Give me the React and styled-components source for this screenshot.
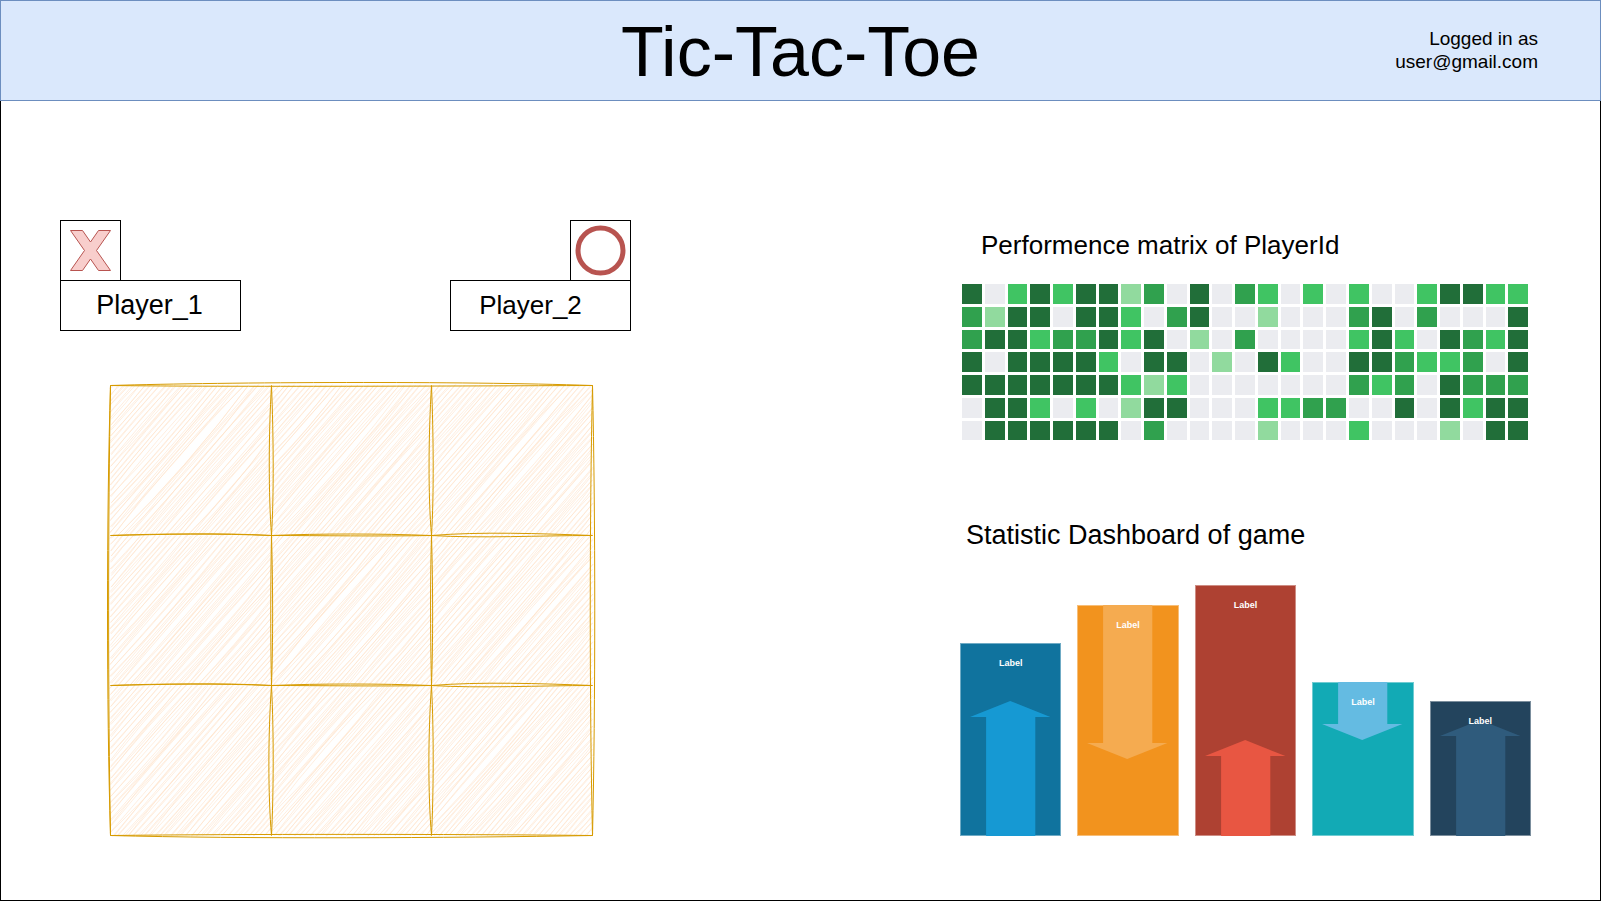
import React from "react";
import styled, { createGlobalStyle } from "styled-components";

const GlobalStyle = createGlobalStyle`
  *, *::before, *::after { box-sizing: border-box; }
  body {
    margin: 0;
    background: #fff;
    color: #000;
    font-family: "Liberation Sans", Arial, Helvetica, sans-serif;
  }
`;

const Page = styled.div`
  display: flex;
  flex-direction: column;
  min-height: 100vh;
`;

const Header = styled.header`
  display: grid;
  grid-template-columns: 1fr auto 1fr;
  align-items: center;
  min-height: 101px;
  padding: 0 62px;
  border: 1px solid #6c8ebf;
  background: #dae8fc;
`;

const Title = styled.h1`
  grid-column: 2;
  margin: 0;
  padding-top: 2px;
  font-size: 70px;
  font-weight: 400;
  line-height: 80px;
`;

const Account = styled.p`
  margin: 0;
  padding-bottom: 2px;
  text-align: right;
  font-size: 19px;
  line-height: 23px;
`;

const Main = styled.main`
  flex: 1;
  display: grid;
  grid-template-columns: 1fr 1fr;
  align-items: start;
  gap: 329px;
  padding: 119px 69px 64px 59px;
  border: 1px solid #000;
  border-top: 0;

  @media (max-width: 1200px) {
    gap: 60px;
  }
`;

const Players = styled.div`
  display: flex;
  justify-content: space-between;
`;

const Player = styled.div`
  display: flex;
  flex-direction: column;
  align-items: ${(p) => (p.$side === "right" ? "flex-end" : "flex-start")};
`;

const MarkBox = styled.div`
  width: 61px;
  height: 60px;
  border: 1px solid #000;
  border-bottom: 0;

  svg {
    display: block;
  }
`;

const NameBox = styled.div`
  width: 181px;
  border: 1px solid #000;
  padding-right: ${(p) => p.$inset}px;
  text-align: center;
  font-size: ${(p) => p.$size}px;
  line-height: 49px;
`;

const Board = styled.div`
  position: relative;
  aspect-ratio: 483 / 451;
  margin: 54px 38px 0 50px;
`;

const BoardDrawing = styled.svg`
  position: absolute;
  inset: 0;
  width: 100%;
  height: 100%;
  overflow: visible;
`;

const Cells = styled.div`
  position: relative;
  display: grid;
  grid-template: repeat(3, 1fr) / repeat(3, 1fr);
  height: 100%;
`;

const Cell = styled.button`
  border: 0;
  padding: 0;
  background: transparent;
  cursor: pointer;
`;

const Stats = styled.div`
  display: flex;
  flex-direction: column;
  padding-top: 10px;
`;

const Heading = styled.h2`
  margin: 0 0 0 ${(p) => p.$indent}px;
  font-size: ${(p) => p.$size}px;
  font-weight: 400;
  line-height: 30px;
`;

const Matrix = styled.div`
  display: grid;
  grid-template-columns: repeat(25, 1fr);
  gap: 3px;
  margin: 24px 3px 80px 2px;
`;

const levels = ["#ebecf0", "#91da9e", "#40c463", "#30a14e", "#216e39"];

const Square = styled.div`
  aspect-ratio: 1;
  background: ${(p) => levels[p.$level]};
`;

const Chart = styled.div`
  display: flex;
  align-items: flex-end;
  gap: 16px;
  margin-top: 35px;
`;

const Bar = styled.div`
  flex: 1;
  display: grid;
  background: ${(p) => p.$color};
  box-shadow: inset 0 0 0 1px rgba(255, 255, 255, 0.4);
`;

const Arrow = styled.svg`
  grid-area: 1 / 1;
  align-self: ${(p) => (p.$down ? "start" : "end")};
  width: 100%;
`;

const BarLabel = styled.span`
  grid-area: 1 / 1;
  padding-top: 14px;
  text-align: center;
  color: #fff;
  font-size: 9px;
  font-weight: 700;
  line-height: 12px;
  z-index: 1;
`;

const performance = [
  [4, 0, 2, 4, 2, 4, 4, 1, 3, 0, 4, 0, 3, 2, 0, 2, 0, 2, 0, 0, 2, 4, 4, 2, 2],
  [3, 1, 4, 4, 0, 4, 4, 2, 0, 3, 4, 0, 0, 1, 0, 0, 0, 3, 4, 0, 3, 0, 0, 0, 4],
  [3, 4, 4, 2, 3, 3, 4, 2, 4, 0, 1, 0, 3, 0, 0, 0, 0, 2, 4, 2, 0, 4, 3, 2, 4],
  [4, 0, 4, 4, 4, 4, 2, 0, 4, 4, 0, 1, 0, 4, 2, 0, 0, 4, 4, 3, 2, 2, 3, 0, 4],
  [4, 4, 4, 4, 4, 4, 4, 2, 1, 2, 0, 0, 0, 0, 0, 0, 0, 3, 2, 3, 0, 4, 3, 3, 3],
  [0, 4, 4, 2, 0, 2, 0, 1, 4, 4, 0, 0, 0, 2, 2, 3, 3, 0, 0, 4, 0, 4, 2, 4, 4],
  [0, 4, 4, 4, 4, 4, 4, 0, 3, 0, 0, 0, 0, 1, 0, 0, 0, 2, 0, 0, 0, 1, 0, 4, 4],
];

const bars = [
  { height: 193, color: "#10739e", arrow: 135, arrowColor: "#1699d3" },
  { height: 231, color: "#f2931e", arrow: 154, arrowColor: "#f5ab50", down: true },
  { height: 251, color: "#ae4132", arrow: 96, arrowColor: "#e85642" },
  { height: 154, color: "#12aab5", arrow: 58, arrowColor: "#64bbe2", down: true },
  { height: 135, color: "#23445d", arrow: 116, arrowColor: "#2f5b7c" },
];

function arrowPoints(h, down) {
  const y = (v) => (down ? h - v : v);
  return [
    [50, 0], [90, 16], [75, 16], [75, h], [26, h], [26, 16], [10, 16],
  ].map(([px, py]) => `${px},${y(py)}`).join(" ");
}

const cellX = [0.5, 161.5, 321.5, 482.5];
const cellY = [0.5, 150.5, 300.5, 450.5];

// Pen strokes: start, both control points, end.
const strokes = [
  "M.5 .5C120 -3 350 -4 482.5 .5",
  "M.5 .5C120 2 350 1 482.5 .5",
  "M.5 .5C-3.5 130 -3.5 320 .5 450.5",
  "M.5 .5C-2 130 -2 320 .5 450.5",
  "M482.5 .5C479.5 130 479.5 320 482.5 450.5",
  "M482.5 .5C485.5 130 485.5 320 482.5 450.5",
  "M.5 450.5C130 454 340 453 482.5 450.5",
  "M.5 450.5C130 449 340 449 482.5 450.5",
  "M161.5 .5C158.5 50 158.5 110 161.5 150.5",
  "M161.5 .5C163.5 50 164 110 161.5 150.5",
  "M161.5 150.5C160.5 200 160.5 260 161.5 300.5",
  "M161.5 150.5C163 200 163 260 161.5 300.5",
  "M161.5 300.5C158 350 158 410 161.5 450.5",
  "M161.5 300.5C164 350 163.5 410 161.5 450.5",
  "M321.5 .5C318.5 50 318 110 321.5 150.5",
  "M321.5 .5C323.5 50 324 110 321.5 150.5",
  "M321.5 150.5C320 200 320.5 260 321.5 300.5",
  "M321.5 150.5C323 200 323 260 321.5 300.5",
  "M321.5 300.5C318 350 318 410 321.5 450.5",
  "M321.5 300.5C324 350 323.5 410 321.5 450.5",
  ...[150.5, 300.5].flatMap((y) => [
    `M.5 ${y}C50 ${y - 2} 110 ${y - 2} 161.5 ${y}`,
    `M.5 ${y}C50 ${y - 1} 110 ${y - 3} 161.5 ${y}`,
    `M161.5 ${y}C210 ${y - 2} 270 ${y - 2} 321.5 ${y}`,
    `M161.5 ${y}C210 ${y} 270 ${y + 1} 321.5 ${y}`,
    `M321.5 ${y}C370 ${y - 4} 430 ${y - 2} 482.5 ${y}`,
    `M321.5 ${y}C370 ${y + 3} 430 ${y} 482.5 ${y}`,
  ]),
];

function makeRandom(seed) {
  let s = seed;
  return () => {
    s = (s * 16807) % 2147483647;
    return s / 2147483647;
  };
}

// Diagonal pencil hatching for one cell; every line is drawn twice with a slight wobble.
function hatch(x0, y0, x1, y1, seed) {
  const random = makeRandom(seed);
  const wobble = (n) => (random() - 0.5) * n;
  const slope = 1.15;
  const w = x1 - x0;
  const h = y1 - y0;
  let d = "";
  for (let c = 3; c < h + w * slope; c += 6) {
    const sx = c > h ? (c - h) / slope : 0;
    const sy = Math.min(c, h);
    const ex = Math.min(c / slope, w);
    const ey = Math.max(c - w * slope, 0);
    const len = Math.hypot(ex - sx, ey - sy) / 40;
    for (let pass = 0; pass < 2; pass += 1) {
      const ax = x0 + sx + wobble(2);
      const ay = y0 + sy + wobble(2);
      const bx = x0 + ex + wobble(2);
      const by = y0 + ey + wobble(2);
      const mx = (ax + bx) / 2 + wobble(3 * len);
      const my = (ay + by) / 2 + wobble(3 * len);
      d += `M${ax.toFixed(1)} ${ay.toFixed(1)}Q${mx.toFixed(1)} ${my.toFixed(1)} ${bx.toFixed(1)} ${by.toFixed(1)}`;
    }
  }
  return d;
}

const cells = [0, 1, 2].flatMap((row) => [0, 1, 2].map((col) => ({ row, col })));

function CrossMark() {
  return (
    <svg width="59" height="59" viewBox="61 221 59 59" aria-hidden="true">
      <path
        d="M70.5 230.5H82.5L90.5 242 98.5 230.5H110.5L96.5 250.5 110.5 270.5H98.5L90.5 259 82.5 270.5H70.5L84.5 250.5Z"
        fill="#f8cecc"
        stroke="#b85450"
      />
    </svg>
  );
}

function CircleMark() {
  return (
    <svg width="59" height="59" viewBox="0 0 59 59" aria-hidden="true">
      <circle cx="29.5" cy="29.5" r="22.5" fill="#fff" stroke="#b85450" strokeWidth="5" />
    </svg>
  );
}

export default function App() {
  return (
    <Page>
      <GlobalStyle />
      <Header>
        <Title>Tic-Tac-Toe</Title>
        <Account>
          Logged in as
          <br />
          user@gmail.com
        </Account>
      </Header>
      <Main>
        <section>
          <Players>
            <Player>
              <MarkBox><CrossMark /></MarkBox>
              <NameBox $size={27} $inset={2}>Player_1</NameBox>
            </Player>
            <Player $side="right">
              <MarkBox><CircleMark /></MarkBox>
              <NameBox $size={26} $inset={20}>Player_2</NameBox>
            </Player>
          </Players>
          <Board>
            <BoardDrawing viewBox="0 0 483 451" fill="none" aria-hidden="true">
              <g stroke="#ffe2ca" strokeWidth="0.6">
                {cells.map(({ row, col }) => (
                  <path
                    key={`${row}${col}`}
                    d={hatch(cellX[col], cellY[row], cellX[col + 1], cellY[row + 1], 977 + row * 311 + col * 127)}
                  />
                ))}
              </g>
              <path d={strokes.join("")} stroke="#d79b00" />
            </BoardDrawing>
            <Cells>
              {cells.map(({ row, col }) => (
                <Cell key={`${row}${col}`} type="button" aria-label={`Row ${row + 1}, column ${col + 1}`} />
              ))}
            </Cells>
          </Board>
        </section>
        <Stats>
          <Heading $size={26} $indent={21}>Performence matrix of PlayerId</Heading>
          <Matrix>
            {performance.flatMap((row, r) =>
              row.map((level, c) => <Square key={`${r}-${c}`} $level={level} />)
            )}
          </Matrix>
          <Heading $size={27} $indent={6}>Statistic Dashboard of game</Heading>
          <Chart>
            {bars.map((bar) => (
              <Bar key={bar.color} $color={bar.color} style={{ height: bar.height }}>
                <BarLabel>Label</BarLabel>
                <Arrow
                  $down={bar.down}
                  height={bar.arrow}
                  viewBox={`0 0 101 ${bar.arrow}`}
                  preserveAspectRatio="none"
                  aria-hidden="true"
                >
                  <polygon points={arrowPoints(bar.arrow, bar.down)} fill={bar.arrowColor} />
                </Arrow>
              </Bar>
            ))}
          </Chart>
        </Stats>
      </Main>
    </Page>
  );
}
